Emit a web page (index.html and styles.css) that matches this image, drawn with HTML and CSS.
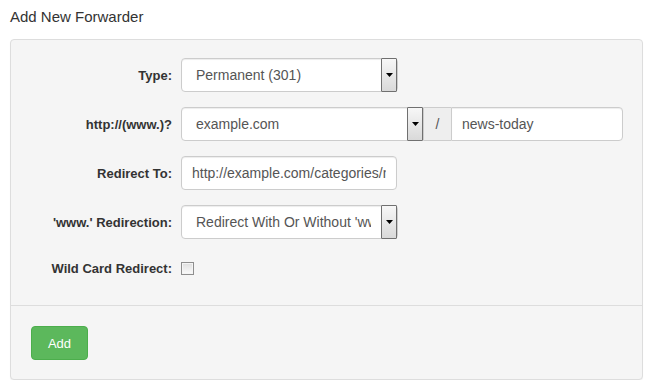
FILE: index.html
```html
<!DOCTYPE html>
<html lang="en">
<head>
  <meta charset="UTF-8">
  <title>Add New Forwarder</title>
  <meta name="viewport" content="width=device-width, initial-scale=1.0">
  <link rel="stylesheet" href="styles.css">
</head>
<body>

<h3 class="page-title">Add New Forwarder</h3>

<form class="panel">
  <div class="panel-body">
    <div class="form-row">
      <label class="form-label">Type:</label>
      <div class="select select-type">
        <span class="select-value">Permanent (301)</span>
        <span class="select-btn"><svg width="7" height="4" viewBox="0 0 7 4"><path d="M0 0h7L3.5 4z" fill="#000"/></svg></span>
      </div>
    </div>

    <div class="form-row">
      <label class="form-label">http://(www.)?</label>
      <div class="input-group">
        <div class="select">
          <span class="select-value">example.com</span>
          <span class="select-btn"><svg width="7" height="4" viewBox="0 0 7 4"><path d="M0 0h7L3.5 4z" fill="#000"/></svg></span>
        </div>
        <span class="addon">/</span>
        <input class="form-control" type="text" value="news-today">
      </div>
    </div>

    <div class="form-row">
      <label class="form-label">Redirect To:</label>
      <input class="form-control input-redirect" type="text" value="http://example.com/categories/news-today">
    </div>

    <div class="form-row">
      <label class="form-label">'www.' Redirection:</label>
      <div class="select select-type">
        <span class="select-value">Redirect With Or Without 'www.'</span>
        <span class="select-btn"><svg width="7" height="4" viewBox="0 0 7 4"><path d="M0 0h7L3.5 4z" fill="#000"/></svg></span>
      </div>
    </div>

    <div class="form-row form-row-check">
      <label class="form-label">Wild Card Redirect:</label>
      <input class="checkbox" type="checkbox">
    </div>
  </div>

  <div class="panel-footer">
    <button class="btn-add" type="button">Add</button>
  </div>
</form>

</body>
</html>
```

FILE: styles.css
```css
* {
  box-sizing: border-box;
}

body {
  margin: 0;
  padding: 8px 7px 0 10px;
  font-family: "Liberation Sans", Arial, sans-serif;
  color: #333;
  background: #fff;
}

.page-title {
  margin: 0 0 14px;
  font-size: 15px;
  line-height: 17px;
  font-weight: normal;
  color: #333;
}

.panel {
  margin: 0;
  background: #f5f5f5;
  border: 1px solid #ddd;
  border-radius: 4px;
  box-shadow: 0 1px 1px rgba(0, 0, 0, 0.05);
}

.panel-body {
  display: flex;
  flex-direction: column;
  gap: 15px;
  padding: 18px 0 23px;
}

.form-row {
  display: flex;
  align-items: center;
  gap: 9px;
  min-height: 34px;
}

.form-row-check {
  min-height: 28px;
}

.form-label {
  flex: none;
  width: 161px;
  text-align: right;
  font-size: 13px;
  font-weight: bold;
  color: #333;
}

.form-control {
  height: 34px;
  padding: 0 10px;
  font-family: inherit;
  font-size: 14px;
  color: #555;
  background: #fff;
  border: 1px solid #ccc;
  border-radius: 4px;
  box-shadow: inset 0 1px 1px rgba(0, 0, 0, 0.075);
  outline: none;
}

.input-redirect {
  width: 216px;
}

.select {
  display: flex;
  align-items: stretch;
  height: 34px;
  padding-left: 14px;
  font-size: 14px;
  color: #555;
  background: #fff;
  border: 1px solid #ccc;
  border-radius: 4px;
  box-shadow: inset 0 1px 1px rgba(0, 0, 0, 0.075);
}

.select-type {
  width: 217px;
}

.select-value {
  flex: 1;
  min-width: 0;
  overflow: hidden;
  white-space: nowrap;
  line-height: 32px;
  margin-right: 10px;
}

.select-btn {
  display: flex;
  align-items: center;
  justify-content: center;
  flex: none;
  width: 16px;
  margin: -1px 0;
  background: linear-gradient(#f7f7f7, #d9d9d9);
  border: 1px solid #707070;
  border-radius: 1px;
}

.input-group {
  display: flex;
  width: 442px;
}

.input-group .select {
  width: 243px;
  border-radius: 4px 0 0 4px;
}

.input-group .addon {
  display: flex;
  align-items: center;
  justify-content: center;
  width: 27px;
  font-size: 14px;
  color: #555;
  background: #eee;
  border-top: 1px solid #ccc;
  border-bottom: 1px solid #ccc;
}

.input-group .form-control {
  flex: 1;
  min-width: 0;
  border-radius: 0 4px 4px 0;
}

.checkbox {
  appearance: none;
  width: 13px;
  height: 13px;
  margin: 0;
  background: linear-gradient(#dedede, #fbfbfb);
  border: 1px solid #8e8e8e;
  box-shadow: inset 0 0 0 1px #f4f4f4;
}

.panel-footer {
  padding: 20px 20px 19px;
  border-top: 1px solid #ddd;
}

.btn-add {
  width: 57px;
  height: 34px;
  font-family: inherit;
  font-size: 13px;
  color: #fff;
  background-color: #5cb85c;
  border: 1px solid #4cae4c;
  border-radius: 4px;
  cursor: pointer;
}

.btn-add:hover {
  background-color: #449d44;
}
```
